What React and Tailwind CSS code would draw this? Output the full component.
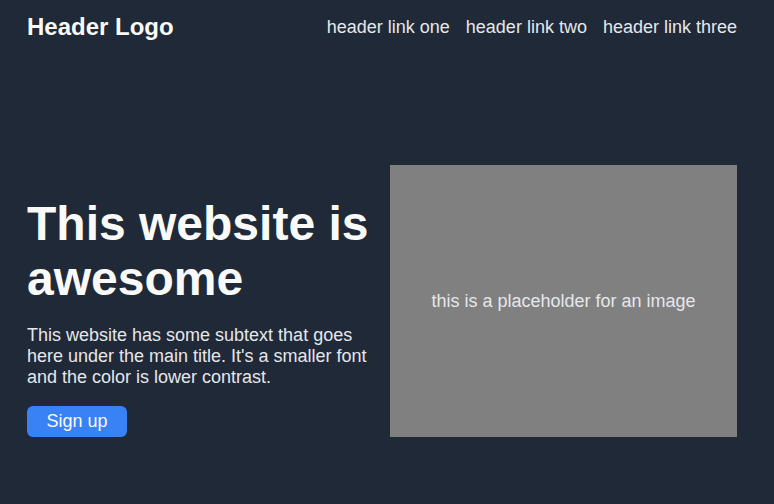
export default function App() {
  return (
    <div className="min-h-[504px] w-full bg-[#1f2937] font-['Liberation_Sans',Arial,sans-serif]">
      <header className="flex h-[54px] items-center justify-between pl-[27px] pr-[37px]">
        <div className="text-[24px] font-bold text-[#f9faf8]">Header Logo</div>
        <nav className="flex gap-4 text-[18px] text-[#e5e7eb]">
          <a href="#">header link one</a>
          <a href="#">header link two</a>
          <a href="#">header link three</a>
        </nav>
      </header>
      <section className="flex items-end gap-[20px] px-[27px] pt-[111px]">
        <div className="w-[343px] shrink-0">
          <h1 className="text-[48px] font-bold leading-[55px] text-[#f9faf8]">
            This website is awesome
          </h1>
          <p className="mt-[19px] text-[18px] leading-[21px] text-[#e5e7eb]">
            This website has some subtext that goes here under the main title. It's a smaller font and the color is lower contrast.
          </p>
          <button className="mt-[18px] h-[31px] w-[100px] rounded-md bg-[#3882f6] text-[18px] text-[#f9faf8]">
            Sign up
          </button>
        </div>
        <div className="flex h-[272px] w-[347px] items-center justify-center bg-[#808080] text-[18px] text-[#e5e7eb]">
          this is a placeholder for an image
        </div>
      </section>
    </div>
  );
}
